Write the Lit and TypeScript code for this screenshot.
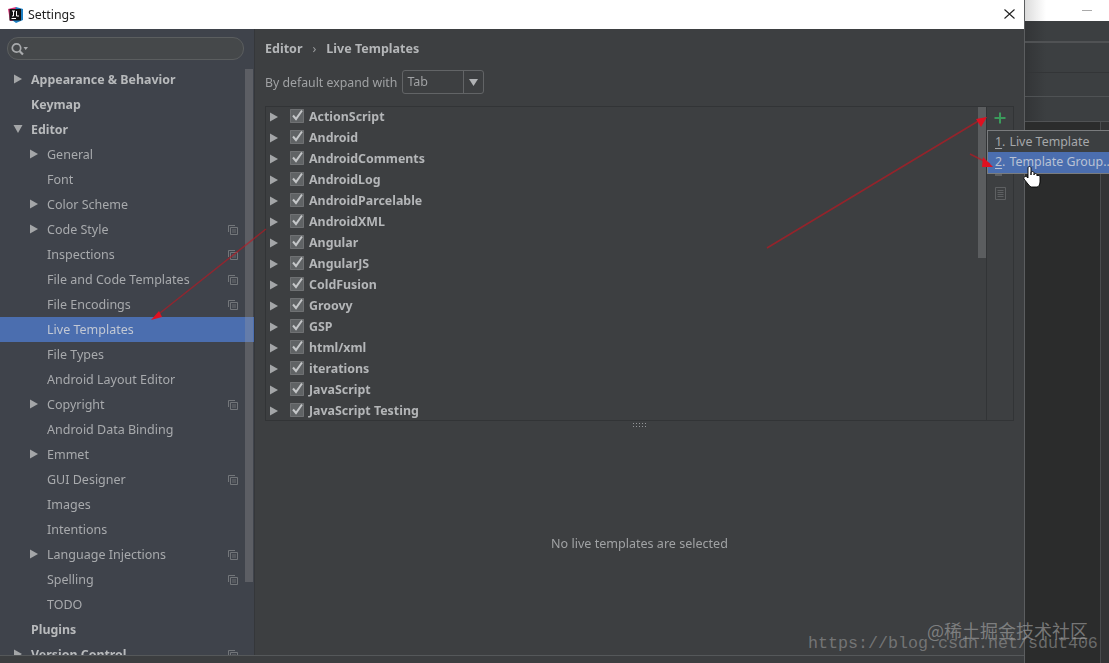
import { LitElement, html, css, svg } from "lit";
import { customElement } from "lit/decorators.js";

type Row = { t: string; lvl: 0 | 1; arrow?: "r" | "d"; copy?: boolean; sel?: boolean };

const TREE: Row[] = [
  { t: "Appearance & Behavior", lvl: 0, arrow: "r" },
  { t: "Keymap", lvl: 0 },
  { t: "Editor", lvl: 0, arrow: "d" },
  { t: "General", lvl: 1, arrow: "r" },
  { t: "Font", lvl: 1 },
  { t: "Color Scheme", lvl: 1, arrow: "r" },
  { t: "Code Style", lvl: 1, arrow: "r", copy: true },
  { t: "Inspections", lvl: 1, copy: true },
  { t: "File and Code Templates", lvl: 1, copy: true },
  { t: "File Encodings", lvl: 1, copy: true },
  { t: "Live Templates", lvl: 1, sel: true },
  { t: "File Types", lvl: 1 },
  { t: "Android Layout Editor", lvl: 1 },
  { t: "Copyright", lvl: 1, arrow: "r", copy: true },
  { t: "Android Data Binding", lvl: 1 },
  { t: "Emmet", lvl: 1, arrow: "r" },
  { t: "GUI Designer", lvl: 1, copy: true },
  { t: "Images", lvl: 1 },
  { t: "Intentions", lvl: 1 },
  { t: "Language Injections", lvl: 1, arrow: "r", copy: true },
  { t: "Spelling", lvl: 1, copy: true },
  { t: "TODO", lvl: 1 },
  { t: "Plugins", lvl: 0 },
  { t: "Version Control", lvl: 0, arrow: "r", copy: true },
];

const GROUPS = [
  "ActionScript", "Android", "AndroidComments", "AndroidLog", "AndroidParcelable", "AndroidXML",
  "Angular", "AngularJS", "ColdFusion", "Groovy", "GSP", "html/xml", "iterations", "JavaScript", "JavaScript Testing",
];

const arrowRight = html`<svg class="arrow" width="10" height="10" viewBox="0 0 10 10"><path d="M1 0.5 L9 5 L1 9.5Z" fill="#a4a6a8"/></svg>`;
const arrowDown = html`<svg class="arrow" width="10" height="10" viewBox="0 0 10 10"><path d="M0.5 1 L9.5 1 L5 9Z" fill="#a4a6a8"/></svg>`;
const copyIcon = html`<svg class="copy" width="10" height="10" viewBox="0 0 10 10" fill="none" stroke="#73767a"><path d="M0.5 7 V0.5 H7"/><path d="M2.5 9.5 V2.5 H9.5 V9.5Z"/><path d="M4 5H8M4 7H8" stroke-width=".8"/></svg>`;

const RED = "#c4141e";

@customElement("app-root")
export class AppRoot extends LitElement {
  static styles = css`
    :host { display: block; width: 1109px; height: 663px; overflow: hidden; position: relative;
      font-family: "Noto Sans", "Open Sans", sans-serif; font-size: 12.5px; color: #b4b6b8; }
    .screen { display: flex; width: 1109px; height: 663px; background: #2b2b2b; filter: blur(.35px); }
    .dialog { width: 1024px; height: 663px; display: flex; flex-direction: column; flex: none; border-right: 1px solid #5c5e60; background: #3c3f41; }
    .title { height: 29px; flex: none; background: #fff; display: flex; align-items: center; color: #222; padding-left: 7px; gap: 5px; position: relative; font-size: 12.4px; }
    .close { margin-left: auto; margin-right: 9px; margin-bottom: 2px; display: flex; }
    .body { flex: 1; display: flex; min-height: 0; }
    .side { width: 254px; flex: none; background: #3f434b; border-right: 1px solid #35373a; display: flex; flex-direction: column; position: relative; overflow: hidden; }
    .search { margin: 8px 10px 0 7px; height: 21px; flex: none; border: 1px solid #5b5e5f; border-radius: 11px; background: #45484a; display: flex; align-items: center; padding-left: 3px; }
    .tree { margin-top: 7px; display: flex; flex-direction: column; }
    .row { height: 25px; box-sizing: border-box; flex: none; display: flex; align-items: center; position: relative; padding-right: 21px; white-space: nowrap; }
    .row.l0 { padding-left: 31px; font-weight: 700; font-size: 12.4px; color: #b8babc; }
    .row.l1 { padding-left: 47px; color: #a8aaad; }
    .row.sel { background: #4b6eaf; color: #c2c8d4; }
    .arrow { position: absolute; top: 7px; }
    .l0 .arrow { left: 13px; }
    .l1 .arrow { left: 29px; }
    .copy { position: absolute; right: 16px; top: 8px; }
    .vscroll { position: absolute; left: 245px; top: 40px; width: 8px; height: 513px; background: rgba(160,160,160,.3); }
    .main { flex: 1; min-width: 0; display: flex; flex-direction: column; padding: 0 10px 0 10px; background: #3d3f41; }
    .crumbs { height: 22px; margin-top: 8px; flex: none; display: flex; align-items: center; font-weight: 700; color: #b4b6b8; gap: 10px; font-size: 12.5px; box-sizing: border-box; }
    .crumb-sep { font-weight: 400; color: #9a9c9e; }
    .expand { height: 24px; margin-top: 11px; flex: none; display: flex; align-items: center; gap: 5px; color: #a0a2a4; font-size: 12.3px; }
    .select { width: 82px; height: 24px; box-sizing: border-box; border: 1px solid #626466; border-radius: 3px; display: flex; align-items: stretch; font-size: 12.5px; }
    .select span { flex: 1; padding-left: 4px; line-height: 22px; }
    .select i { width: 19px; border-left: 1px solid #626466; display: flex; align-items: center; justify-content: center; }
    .table { margin-top: 12px; height: 315px; box-sizing: border-box; flex: none; border: 1px solid #323436; display: flex; position: relative; }
    .list { flex: 1; overflow: hidden; }
    .item { height: 21px; box-sizing: border-box; padding-bottom: 2px; display: flex; align-items: center; position: relative; padding-left: 43px; font-weight: 700; color: #b4b6b8; white-space: nowrap; font-size: 12.4px; }
    .item .arrow { left: 3px; top: 5px; }
    .check { position: absolute; left: 24px; top: 2px; width: 14px; height: 14px; background: #606365; border-radius: 1px; box-shadow: inset 0 0 0 1px #6f7173; }
    .check svg { display: block; }
    .track { width: 9px; flex: none; position: relative; }
    .thumb { position: absolute; left: 1px; top: 0; width: 8px; height: 151px; background: #5b5d5f; }
    .tools { width: 26px; flex: none; border-left: 1px solid #323436; display: flex; flex-direction: column; align-items: center; position: relative; }
    .t-plus { margin-top: 4px; display: flex; }
    .t-doc { margin-top: 62px; display: flex; }
    .grip { height: 5px; flex: none; margin-top: 2px; display: flex; justify-content: center; }
    .empty { flex: 1; display: flex; align-items: flex-start; justify-content: center; padding-top: 107px; color: #a0a2a4; font-size: 12.55px; }
    .foot { height: 7px; flex: none; background: #3c3e40; border-top: 1px solid #55585a; }
    .back { flex: 1; min-width: 0; display: flex; flex-direction: column; background: #2b2b2b; }
    .b-top { height: 21px; flex: none; background: linear-gradient(90deg, #dcdcdc, #fff 25%); display: flex; justify-content: flex-end; align-items: center; padding-right: 17px; }
    .b-dash { width: 10px; height: 1px; background: #aaa; }
    .b-bar { height: 22px; box-sizing: border-box; flex: none; background: linear-gradient(90deg, #333537, #3c3f41 25%); border-bottom: 2px solid #505254; }
    .b-bar2 { height: 30px; box-sizing: border-box; flex: none; background: linear-gradient(90deg, #333537, #3c3f41 25%); border-bottom: 1px solid #333537; }
    .b-bar3 { height: 24px; box-sizing: border-box; flex: none; background: linear-gradient(90deg, #333537, #3c3f41 25%); border-bottom: 1px solid #4f5254; }
    .b-bar4 { height: 25px; box-sizing: border-box; flex: none; background: linear-gradient(90deg, #333537, #3c3f41 25%); border-bottom: 1px solid #505254; }
    .b-edit { flex: 1; display: flex; background: #2b2c2c; }
    .b-gutter { width: 8px; margin-left: auto; border-left: 1px solid #4a4c4e; background: #333435; }
    .popup { position: absolute; left: 987px; top: 130px; width: 122px; height: 44px; background: #3c3f41; border: 1px solid #7a7c7e; border-right: none; box-sizing: border-box; }
    .mi { height: 21px; box-sizing: border-box; display: flex; align-items: center; padding-left: 7px; color: #a6a8aa; white-space: nowrap; overflow: hidden; font-size: 12.4px; }
    .mi.on { background: #4b6eaf; color: #b9c2d4; padding-bottom: 2px; }
    .mi u { text-underline-offset: 2px; }
    .mi b { font-weight: 400; margin-left: 4px; }
    .overlay { position: absolute; left: 0; top: 0; pointer-events: none; }
    .wm1 { position: absolute; left: 927px; top: 617px; font-family: "Noto Sans CJK SC", "Noto Sans", sans-serif; font-size: 18px; color: rgba(170,170,170,.6); white-space: nowrap; }
    .wm2 { position: absolute; left: 808px; top: 634px; font-family: "Liberation Mono", monospace; font-size: 16.67px; color: rgba(170,170,170,.5); white-space: nowrap; }
  `;

  render() {
    return html`<div class="screen">
      <div class="dialog">
        <div class="title">
          <svg width="16" height="16" viewBox="0 0 16 16">
            <path d="M1 2 L9 0 L9 14 L3 14Z" fill="#e0307a"/><path d="M9 0 L16 2 L16 13 L9 16 L5 13Z" fill="#1d7fc4"/>
            <rect x="2.5" y="2" width="11.5" height="11.5" fill="#111"/>
            <path d="M5 4H8M6.5 4V9H5M9.5 4V9H12M4.5 11.5H9" stroke="#fff" stroke-width="1" fill="none"/>
          </svg>
          <span>Settings</span>
          <span class="close"><svg width="11" height="10" viewBox="0 0 11 10"><path d="M.5 .5L10.5 9.5M10.5 .5L.5 9.5" stroke="#222" stroke-width="1.1"/></svg></span>
        </div>
        <div class="body">
          <div class="side">
            <div class="search">
              <svg width="20" height="14" viewBox="0 0 20 14" fill="none"><circle cx="5.5" cy="6" r="4.2" stroke="#a8aaac" stroke-width="1.7"/><path d="M8.5 9L12 12.5" stroke="#a8aaac" stroke-width="2.2"/><path d="M12.5 5H17L14.7 8Z" fill="#a8aaac" stroke="none"/></svg>
            </div>
            <div class="tree">
              ${TREE.map(
                (r) => html`<div class="row l${r.lvl} ${r.sel ? "sel" : ""}">
                  ${r.arrow === "r" ? arrowRight : r.arrow === "d" ? arrowDown : ""}
                  <span>${r.t}</span>
                  ${r.copy ? copyIcon : ""}
                </div>`
              )}
            </div>
            <div class="vscroll"></div>
          </div>
          <div class="main">
            <div class="crumbs"><span>Editor</span><span class="crumb-sep">›</span><span>Live Templates</span></div>
            <div class="expand">
              <span>By default expand with</span>
              <div class="select"><span>Tab</span><i><svg width="9" height="7" viewBox="0 0 9 7"><path d="M0 0H9L4.5 7Z" fill="#b0b2b4"/></svg></i></div>
            </div>
            <div class="table">
              <div class="list">
                ${GROUPS.map(
                  (g) => html`<div class="item">
                    ${arrowRight}
                    <span class="check"><svg width="14" height="14" viewBox="0 0 14 14" fill="none"><path d="M3 6.5L6 10L12 1.5" stroke="#c4c6c8" stroke-width="2"/></svg></span>
                    <span>${g}</span>
                  </div>`
                )}
              </div>
              <div class="track"><div class="thumb"></div></div>
              <div class="tools">
                <span class="t-plus"><svg width="14" height="14" viewBox="0 0 14 14"><path d="M7 1.5V12.5M1.5 7H12.5" stroke="#3b9a5b" stroke-width="2"/></svg></span>
                <span class="t-doc"><svg width="13" height="13" viewBox="0 0 13 13" fill="none" stroke="#5e6062"><path d="M1.5 .5H11.5V12.5H1.5Z"/><path d="M3.5 3.5H9.5M3.5 5.5H9.5M3.5 7.5H9.5M3.5 9.5H9.5"/></svg></span>
              </div>
            </div>
            <div class="grip"><svg width="14" height="5" viewBox="0 0 14 5"><path d="M0 .5H14M0 3.5H14" stroke="#95979a" stroke-dasharray="1 2"/></svg></div>
            <div class="empty">No live templates are selected</div>
          </div>
        </div>
        <div class="foot"></div>
      </div>
      <div class="back">
        <div class="b-top"><div class="b-dash"></div></div>
        <div class="b-bar"></div><div class="b-bar2"></div><div class="b-bar3"></div><div class="b-bar4"></div>
        <div class="b-edit"><div class="b-gutter"></div></div>
      </div>
    </div>
    <div class="popup">
      <div class="mi"><u>1</u>.<b>Live Template</b></div>
      <div class="mi on"><u>2</u>.<b>Template Group...</b></div>
    </div>
    <svg class="overlay" width="1109" height="663" viewBox="0 0 1109 663" fill="none">
      ${svg`
        <path d="M995 175H1002" stroke="#5e6062" stroke-width="2"/>
        <path d="M266 229L155 317" stroke="${RED}" stroke-width="1.5" opacity=".6"/>
        <path d="M151 320L159 311L162 317Z" fill="#e01020"/>
        <path d="M767 248L980 120" stroke="${RED}" stroke-width="1.5" opacity=".65"/>
        <path d="M987 117L976 119L981 127Z" fill="#e01020"/>
        <path d="M970 154L990 164" stroke="${RED}" stroke-width="1.5" opacity=".65"/>
        <path d="M993 167L983 157L982 167Z" fill="#e01020"/>
        <path d="M1028 178V168C1028 166 1031 166 1031 168V175V173C1031 171 1034 171 1034 173V175C1034 173 1037 173 1037 175V176C1037 175 1040 175 1040 177V182C1040 185 1038 187 1037 187H1031C1029 186 1025 180 1024 179C1023 177 1026 175 1028 178Z" fill="#fff" stroke="#000" stroke-width=".9"/>
      `}
    </svg>
    <div class="wm1">@稀土掘金技术社区</div>
    <div class="wm2">https://blog.csdn.net/sdut406</div>`;
  }
}
